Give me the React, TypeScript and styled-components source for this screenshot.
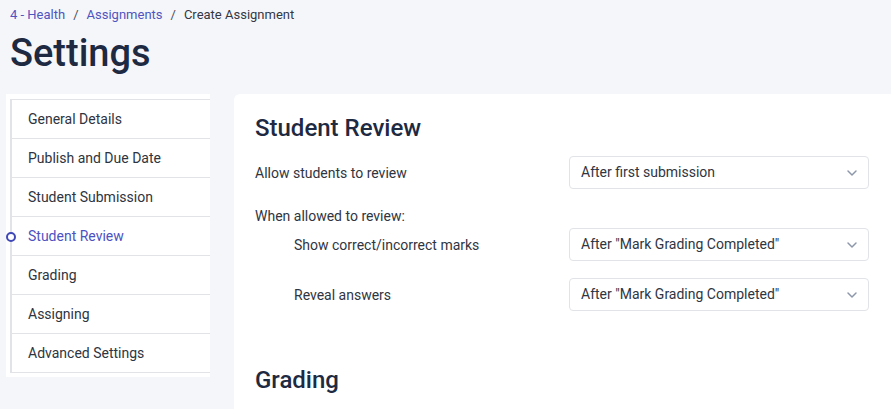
import React from "react";
import styled, { createGlobalStyle } from "styled-components";

const Global = createGlobalStyle`
  html, body { margin: 0; padding: 0; }
  body {
    background: #f5f6fa;
    font-family: Roboto, "Liberation Sans", Arial, sans-serif;
    color: #2b2f36;
    overflow: hidden;
  }
`;

const Page = styled.div`
  width: 891px;
  height: 409px;
  overflow: hidden;
  background: #f5f6fa;
`;

const Header = styled.div`
  padding: 6px 0 0 10px;
`;

const Crumbs = styled.nav`
  display: flex;
  align-items: center;
  gap: 8px;
  font-size: 13px;
  line-height: 17px;
  color: #333844;
`;

const CrumbLink = styled.a`
  color: #4f54c0;
  text-decoration: none;
`;

const Sep = styled.span`
  color: #4a4f5a;
`;

const Title = styled.h1`
  margin: 6px 0 0 0;
  font-size: 38px;
  line-height: 48px;
  font-weight: 500;
  color: #1e2a42;
`;

const Body = styled.div`
  display: flex;
  align-items: flex-start;
  gap: 24px;
  margin-top: 17px;
  padding-left: 6px;
`;

const Sidebar = styled.aside`
  width: 204px;
  background: #fff;
  padding: 5px 0 4px 4px;
  box-sizing: border-box;
  flex-shrink: 0;
`;

const NavList = styled.ul`
  list-style: none;
  margin: 0;
  padding: 0;
  border-left: 2px solid #e2e3e6;
  border-bottom: 1px solid #e2e3e6;
`;

const NavItem = styled.li<{ $active?: boolean }>`
  position: relative;
  height: 38px;
  display: flex;
  align-items: center;
  padding-left: 16px;
  border-top: 1px solid #e2e3e6;
  font-size: 14px;
  color: ${(p) => (p.$active ? "#4c51c2" : "#2e3440")};
`;

const Dot = styled.span`
  position: absolute;
  left: -6px;
  top: 50%;
  width: 6px;
  height: 6px;
  margin-top: -4px;
  border: 2px solid #4048b8;
  border-radius: 50%;
  background: #fff;
`;

const Card = styled.section`
  flex: 1;
  background: #fff;
  border-radius: 6px 0 0 0;
  padding: 19px 22px 0 21px;
  height: 330px;
  box-sizing: border-box;
`;

const SectionTitle = styled.h2<{ $mt?: number }>`
  margin: ${(p) => p.$mt ?? 0}px 0 0 0;
  font-size: 24px;
  line-height: 30px;
  font-weight: 500;
  color: #1e2a42;
`;

const Row = styled.div<{ $indent?: boolean; $mt: number }>`
  display: grid;
  grid-template-columns: 1fr 300px;
  align-items: center;
  margin-top: ${(p) => p.$mt}px;
  padding-left: ${(p) => (p.$indent ? 39 : 0)}px;
`;

const Label = styled.div<{ $mt?: number }>`
  font-size: 14px;
  line-height: 18px;
  color: #30353f;
  margin-top: ${(p) => p.$mt ?? 0}px;
`;

const Select = styled.div`
  height: 33px;
  box-sizing: border-box;
  border: 1px solid #e1e3e8;
  border-radius: 4px;
  display: flex;
  align-items: center;
  justify-content: space-between;
  padding: 0 10px 2px 11px;
  font-size: 14px;
  color: #30353f;
`;

const Chevron = () => (
  <svg width="12" height="12" viewBox="0 0 12 12" style={{ marginTop: 3 }}>
    <path d="M2 4l4 4 4-4" fill="none" stroke="#8d97ab" strokeWidth="1.5" strokeLinecap="round" strokeLinejoin="round" />
  </svg>
);

const items = [
  "General Details",
  "Publish and Due Date",
  "Student Submission",
  "Student Review",
  "Grading",
  "Assigning",
  "Advanced Settings",
];

export default function App() {
  return (
    <Page>
      <Global />
      <Header>
        <Crumbs>
          <CrumbLink>4 - Health</CrumbLink>
          <Sep>/</Sep>
          <CrumbLink>Assignments</CrumbLink>
          <Sep>/</Sep>
          <span>Create Assignment</span>
        </Crumbs>
        <Title>Settings</Title>
      </Header>
      <Body>
        <Sidebar>
          <NavList>
            {items.map((it) => (
              <NavItem key={it} $active={it === "Student Review"}>
                {it === "Student Review" && <Dot />}
                {it}
              </NavItem>
            ))}
          </NavList>
        </Sidebar>
        <Card>
          <SectionTitle>Student Review</SectionTitle>
          <Row $mt={13}>
            <Label>Allow students to review</Label>
            <Select>
              <span>After first submission</span>
              <Chevron />
            </Select>
          </Row>
          <Label $mt={18}>When allowed to review:</Label>
          <Row $indent $mt={3}>
            <Label>Show correct/incorrect marks</Label>
            <Select>
              <span>After "Mark Grading Completed"</span>
              <Chevron />
            </Select>
          </Row>
          <Row $indent $mt={17}>
            <Label>Reveal answers</Label>
            <Select>
              <span>After "Mark Grading Completed"</span>
              <Chevron />
            </Select>
          </Row>
          <SectionTitle $mt={54}>Grading</SectionTitle>
        </Card>
      </Body>
    </Page>
  );
}
